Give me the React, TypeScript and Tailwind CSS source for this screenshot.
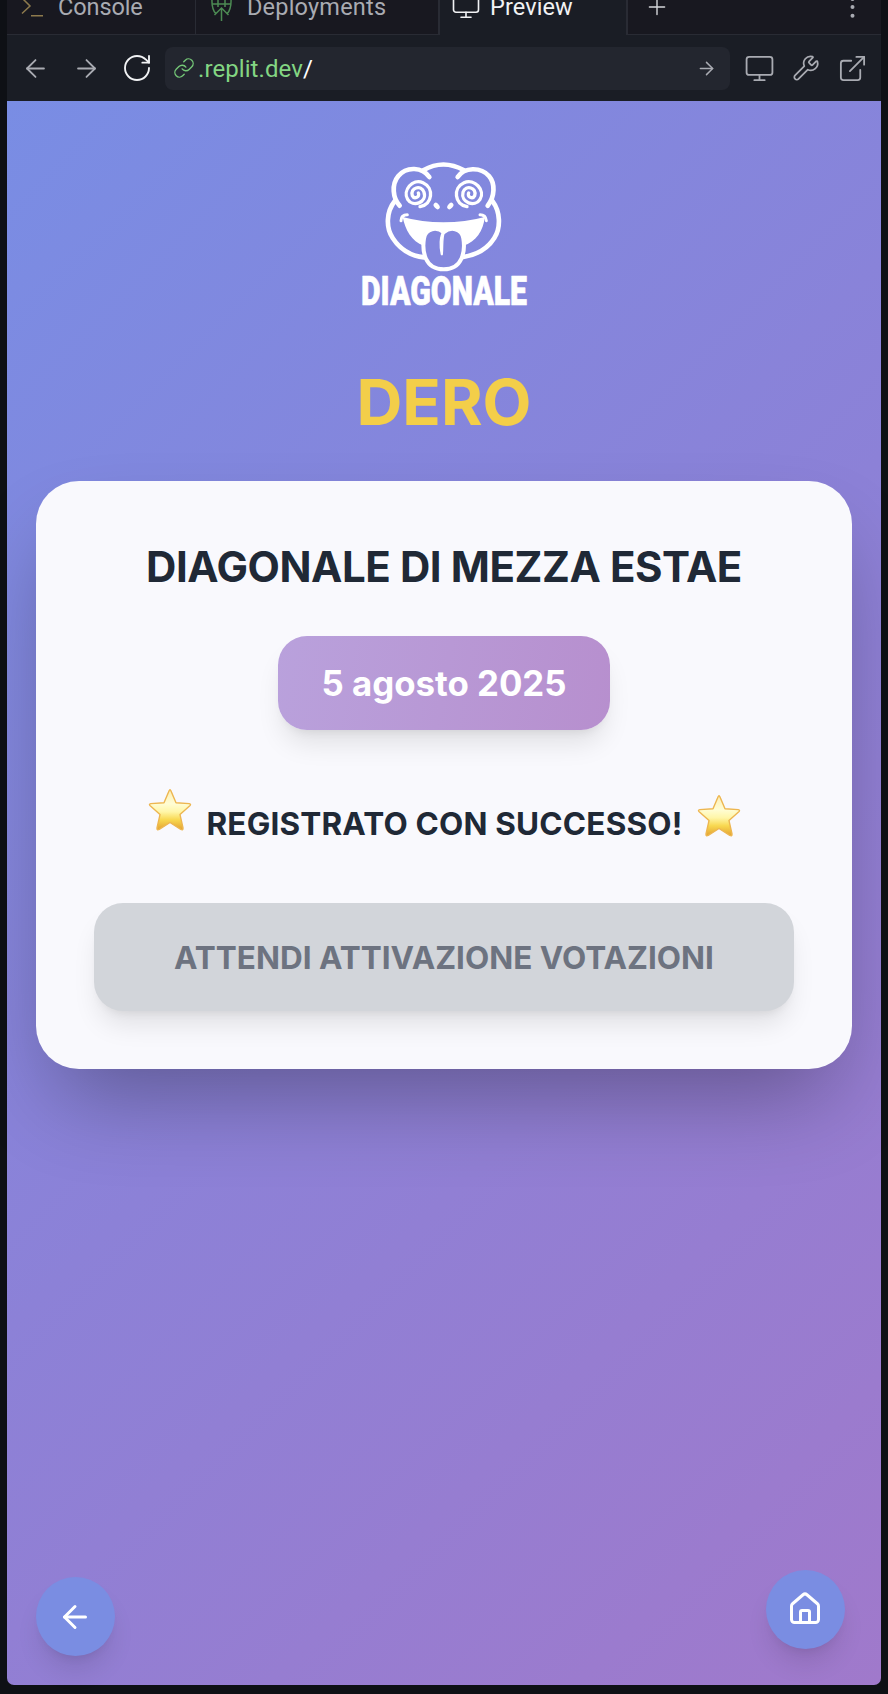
import React from "react";
import { ArrowLeft, ArrowRight, RotateCw, Monitor, Wrench, ExternalLink, Link, Plus } from "lucide-react";

function Frog() {
  return (
    <svg className="ml-[1px] h-[170px] w-[210px]" viewBox="0 0 630 510" fill="none" stroke="#fff" strokeWidth="14" strokeLinecap="round" strokeLinejoin="round">
      <path d="M164 154 C139 185 137 233 158 264 C180 298 215 318 252 322" />
      <path d="M458 154 C481 185 483 233 463 264 C443 296 407 315 370 321" />
      <path d="M179 167 C158 145 154 103 175 78 C200 48 247 51 268 81" />
      <path d="M443 167 C465 140 466 100 447 78 C422 50 373 51 353 81" />
      <path d="M250 61 Q310 26 372 61" />
      <path strokeWidth="10" d="M240 170 C278 164 283 113 249 98 C217 84 187 122 203 148 C218 173 262 158 252 127 C244 103 209 113 217 137 C223 149 241 141 235 129" />
      <path strokeWidth="10" d="M381 170 C343 164 338 113 372 98 C404 84 437 122 420 148 C405 173 361 158 369 127 C377 103 412 113 404 137 C398 149 380 141 386 129" />
      <ellipse cx="290" cy="168" rx="7.500" ry="11" transform="rotate(-40 290 168)" fill="#fff" stroke="none" />
      <ellipse cx="331" cy="168" rx="7.500" ry="11" transform="rotate(40 331 168)" fill="#fff" stroke="none" />
      <path d="M188 201 Q246 217 310 217 Q376 217 434 201 C431 241 408 276 370 287 L372 257 C365 235 335 233 311 243 C287 233 257 235 249 257 L251 287 C215 275 195 238 188 201Z" fill="#fff" stroke="none" />
      <path strokeWidth="9" d="M183 212 Q183 194 202 194 M439 212 Q437 194 420 194" />
      <path d="M311 247 C292 230 257 233 252 265 C246 302 253 358 311 358 C369 358 376 302 370 265 C365 233 330 230 311 247Z" fill="#8387dd" strokeWidth="12" />
      <path strokeWidth="4" fill="#fff" d="M311 243 C298 258 299 290 304 313 Q307 316 307 311 C309 290 306 258 314 245Z" />
      <text x="63" y="464" fontFamily="Roboto" fontWeight="900" fontSize="123" textLength="498" lengthAdjust="spacingAndGlyphs" fill="#fff" strokeWidth="2">DIAGONALE</text>
    </svg>
  );
}

function Star() {
  return (
    <svg className="h-[44px] w-[44px]" viewBox="0 0 44 44">
      <defs>
        <linearGradient id="gold" x1="0" y1="0" x2="0" y2="1">
          <stop offset="0" stopColor="#fdeeb4" />
          <stop offset=".35" stopColor="#fffdd4" />
          <stop offset=".55" stopColor="#fff6a8" />
          <stop offset=".75" stopColor="#f8d850" />
          <stop offset="1" stopColor="#e3a232" />
        </linearGradient>
      </defs>
      <path d="M21 3 Q22 0.500 23 3 L28 14.800 L41.200 15.600 Q43.500 16.200 41.800 17.800 L32 26.600 L35 40 Q35.200 42.600 32.800 41.400 L22 34.500 L11.200 41.400 Q8.800 42.600 9 40 L12 26.600 L2.200 17.800 Q0.500 16.200 2.800 15.600 L16 14.800Z" fill="url(#gold)" stroke="#edb650" strokeWidth="1.400" strokeLinejoin="round" />
    </svg>
  );
}

export default function App() {
  return (
    <div className="h-[1694px] w-[888px] overflow-hidden bg-[#0e1015] pr-[7px] pl-[7px] font-['Inter',sans-serif]">
      <div className="flex h-[101px] flex-col bg-[#1a1d25] font-['Roboto',sans-serif]">
        <div className="flex h-[35px] shrink-0 text-[23.500px] text-[#a9abb2]">
          <div className="flex w-[189px] shrink-0 border-r border-b border-[#292b34] bg-[#181820]">
            <svg className="ml-[14px] h-[20px] w-[24px]" fill="none" stroke="#8d7a4d" strokeWidth="1.500"><path d="M1 -2 L9 6 L1 13.500 M10 15.700 H22" /></svg>
            <span className="-mt-[7px] ml-[13px] leading-[28px] tracking-[-0.100px]">Console</span>
          </div>
          <div className="flex w-[244px] shrink-0 border-r-2 border-b border-[#292b34] bg-[#181820]">
            <svg className="ml-[14px] h-[22px] w-[24px]" fill="none" stroke="#4c8a53" strokeWidth="1.500"><path d="M2 -1 Q1.500 9 6 14 M21 -1 Q21.500 9 17 14 M2 4 H21 M8 -1 V7 M15 -1 V7 M11.500 21 V8 M4.500 15 L11.500 8 L18.500 15" /></svg>
            <span className="-mt-[7px] ml-[13px] leading-[28px] tracking-[0.200px]">Deployments</span>
          </div>
          <div className="flex w-[188px] shrink-0 border-r-2 border-[#292b34] text-[#f1f2f4]">
            <Monitor className="-mt-[9px] ml-[11px] size-[30px]" strokeWidth={1.3} />
            <span className="-mt-[7px] ml-[9px] leading-[28px] tracking-[0.100px]">Preview</span>
          </div>
          <div className="flex grow justify-between border-b border-[#292b34] bg-[#181820]">
            <Plus className="-mt-[6px] ml-[16px] size-[26px] text-[#d5d6da]" strokeWidth={1.3} />
            <svg className="mr-[26px] h-[20px] w-[6px]" fill="#a9abb2"><circle cx="3.500" cy="-1" r="2" /><circle cx="3.500" cy="7" r="2" /><circle cx="3.500" cy="15.700" r="2" /></svg>
          </div>
        </div>
        <div className="flex h-[66px] items-center text-[#a9abb2]">
          <ArrowLeft className="ml-[14px] size-[29px]" strokeWidth={1.5} />
          <ArrowRight className="ml-[22px] size-[29px]" strokeWidth={1.5} />
          <RotateCw className="ml-[20px] size-[32px] text-[#f1f2f4]" strokeWidth={1.4} />
          <div className="ml-[12px] flex h-[43px] w-[565px] items-center rounded-[8px] bg-[#23262f] pr-[13px] pl-[8px]">
            <Link className="size-[22px] text-[#74c777]" strokeWidth={1.5} />
            <span className="mt-[2px] ml-[3px] text-[24px] tracking-[0.080px] text-[#83d683]">.replit.dev<span className="text-white">/</span></span>
            <ArrowRight className="ml-auto size-[21px]" strokeWidth={1.7} />
          </div>
          <Monitor className="ml-[14px] size-[31px]" strokeWidth={1.4} />
          <Wrench className="ml-[17px] size-[28px]" strokeWidth={1.5} />
          <ExternalLink className="ml-[17px] size-[31px]" strokeWidth={1.4} />
        </div>
      </div>
      <main className="flex h-[1584px] flex-col items-center rounded-b-[7px] bg-[linear-gradient(135deg,#798de4_0%,#8c81d7_50%,#a079cb_100%)] px-[29px] pt-[49px]">
        <Frog />
        <h1 className="mt-[42px] h-[80px] text-[63.500px] leading-[80px] font-bold text-[#f3ce49]">DERO</h1>
        <section className="mt-[39px] flex h-[588px] w-full shrink-0 flex-col items-center rounded-[43px] bg-[#f9f9fd] px-[58px] pt-[60px] shadow-[0_45px_90px_-21px_rgba(0,0,0,0.33)]">
          <h2 className="h-[52px] text-[42px] leading-[52px] font-bold tracking-[-0.430px] whitespace-nowrap text-[#202936]">DIAGONALE DI MEZZA ESTAE</h2>
          <div className="mt-[43px] flex h-[94px] w-[332px] items-center justify-center rounded-[29px] bg-[linear-gradient(100deg,#b9a1dc,#b78fce)] pt-[1px] text-[34.800px] font-bold text-white shadow-[0_18px_27px_-5px_rgba(0,0,0,0.1),0_7px_11px_-7px_rgba(0,0,0,0.1)]">5 agosto 2025</div>
          <div className="mt-[58px] ml-[1px] flex h-[54px] items-start text-[31.500px] font-bold whitespace-nowrap text-[#202936]">
            <Star />
            <span className="mt-[12px] ml-[14px] leading-[48px] tracking-[0.180px]">REGISTRATO CON SUCCESSO!</span>
            <div className="mt-[6px] ml-[14px]"><Star /></div>
          </div>
          <button className="mt-[61px] h-[108px] w-full rounded-[29px] bg-[#d2d5da] pt-[2px] text-[31.500px] font-bold whitespace-nowrap text-[#6d7380] shadow-[0_18px_27px_-5px_rgba(0,0,0,0.1),0_7px_11px_-7px_rgba(0,0,0,0.1)]">ATTENDI ATTIVAZIONE VOTAZIONI</button>
        </section>
        <nav className="mt-auto mb-[29px] flex w-full items-end justify-between pr-[7px]">
          <button className="flex size-[79px] items-center justify-center rounded-full bg-[#7a8de2] pr-[1px] text-white shadow-[0_18px_27px_-5px_rgba(0,0,0,0.11),0_7px_11px_-7px_rgba(0,0,0,0.1)]"><ArrowLeft size={36} strokeWidth={2} /></button>
          <button className="mb-[7px] flex size-[79px] items-center justify-center rounded-full bg-[#7a8de2] pr-[2px] text-white shadow-[0_18px_27px_-5px_rgba(0,0,0,0.11),0_7px_11px_-7px_rgba(0,0,0,0.1)]">
            <svg className="-mt-[1px]" width="36" height="36" viewBox="0 0 24 24" fill="none" stroke="currentColor" strokeWidth="2" strokeLinejoin="round"><path d="M15 21v-7a1 1 0 0 0-1-1h-4a1 1 0 0 0-1 1v7" /><path d="M3 10a2 2 0 0 1 .7-1.500l7-6a2 2 0 0 1 2.600 0l7 6A2 2 0 0 1 21 10v9a2 2 0 0 1-2 2H5a2 2 0 0 1-2-2z" /></svg>
          </button>
        </nav>
      </main>
    </div>
  );
}
